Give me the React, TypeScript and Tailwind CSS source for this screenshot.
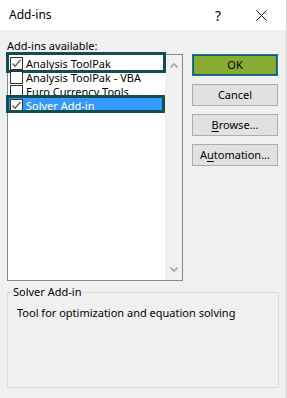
import React from "react";

const font = { fontFamily: "'Segoe UI', 'Noto Sans', sans-serif" };

function Check({ checked }: { checked: boolean }) {
  return (
    <div className="w-[13px] h-[13px] shrink-0 border border-[#333333] bg-white flex items-center justify-center">
      {checked && (
        <svg width="11" height="11" viewBox="0 0 11 11">
          <path d="M1.5 5.5 L4 8.2 L9.5 2" fill="none" stroke="#5a5a5a" strokeWidth="1.3" />
        </svg>
      )}
    </div>
  );
}

type Item = { label: string; checked: boolean; selected?: boolean; frame?: string };

const items: Item[] = [
  { label: "Analysis ToolPak", checked: true, frame: "top-[-4px] bottom-[-3px]" },
  { label: "Analysis ToolPak - VBA", checked: false },
  { label: "Euro Currency Tools", checked: false },
  { label: "Solver Add-in", checked: true, selected: true, frame: "top-[-3px] bottom-[-1px]" },
];

function Btn({ children, primary }: { children: React.ReactNode; primary?: boolean }) {
  return (
    <div
      className={
        "w-[86px] h-[22px] flex items-center justify-center text-[11px] text-black border " +
        (primary
          ? "bg-[#8aab33] border-[#0078d7] shadow-[inset_0_0_0_1px_#2f5b25]"
          : "bg-[#e1e1e1] border-[#adadad]")
      }
    >
      {children}
    </div>
  );
}

export default function App() {
  return (
    <div className="w-[287px] h-[398px] bg-[#f0f0f0] flex flex-col border-r border-[#d4d4d4] overflow-hidden" style={font}>
      {/* Title bar */}
      <div className="h-[30px] bg-white flex items-center shrink-0">
        <span className="ml-[9px] text-[12px] text-black">Add-ins</span>
        <span className="ml-auto text-[14px] text-black mr-[35px]">?</span>
        <svg width="11" height="11" viewBox="0 0 11 11" className="mr-[19px]">
          <path d="M0.5 0.5 L10.5 10.5 M10.5 0.5 L0.5 10.5" stroke="#111" strokeWidth="1" />
        </svg>
      </div>

      <div className="flex pl-[7px] pt-[7px]">
        {/* Left column */}
        <div className="flex flex-col w-[176px]">
          <div className="text-[11px] leading-[17px] text-black h-[17px]">
            <span className="underline underline-offset-2">A</span>dd-ins available:
          </div>
          <div className="h-[227px] border border-[#828790] bg-white flex">
            <div className="flex-1 flex flex-col pt-[1px]">
              {items.map((it) => (
                <div
                  key={it.label}
                  className={
                    "relative h-[14px] flex items-center pl-[2px] " +
                    (it.selected ? "bg-[#3399ff] text-white mr-[1px]" : "text-black")
                  }
                >
                  <Check checked={it.checked} />
                  <span className="ml-[3px] text-[11px] leading-[13px] whitespace-nowrap">{it.label}</span>
                  {it.frame && (
                    <div className={"absolute left-[-2px] right-[-1px] border-[3px] border-[#134d4f] " + it.frame} />
                  )}
                </div>
              ))}
            </div>
            <div className="w-[17px] bg-[#f0f0f0] flex flex-col items-center justify-between py-[8px]">
              <svg width="8" height="5" viewBox="0 0 8 5">
                <path d="M0.5 4.5 L4 1 L7.5 4.5" fill="none" stroke="#a3a3a3" strokeWidth="1.6" />
              </svg>
              <svg width="8" height="5" viewBox="0 0 8 5">
                <path d="M0.5 0.5 L4 4 L7.5 0.5" fill="none" stroke="#a3a3a3" strokeWidth="1.6" />
              </svg>
            </div>
          </div>
        </div>

        {/* Buttons */}
        <div className="flex flex-col gap-[8px] ml-[9px] pt-[17px]">
          <Btn primary>OK</Btn>
          <Btn>Cancel</Btn>
          <Btn>
            <span className="underline underline-offset-2">B</span>rowse...
          </Btn>
          <Btn>
            A<span className="underline underline-offset-2">u</span>tomation...
          </Btn>
        </div>
      </div>

      {/* Description group */}
      <div className="mx-[7px] mt-[11px] w-[272px] h-[96px] border border-[#dcdcdc] relative">
        <span className="absolute left-[4px] top-[-9px] bg-[#f0f0f0] px-[1px] text-[11px] leading-[16px] text-black">
          Solver Add-in
        </span>
        <div className="pl-[9px] pt-[12px] text-[11px] leading-[16px] text-black">
          Tool for optimization and equation solving
        </div>
      </div>
    </div>
  );
}
